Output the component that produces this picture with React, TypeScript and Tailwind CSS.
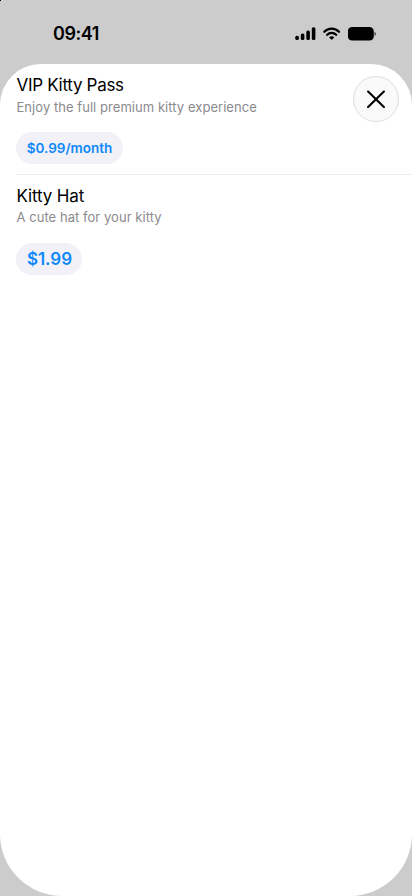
const products = [
  {
    id: "pass",
    title: "VIP Kitty Pass",
    description: "Enjoy the full premium kitty experience",
    price: "$0.99/month",
    titleClass: "tracking-[-0.3px]",
    priceClass: "w-[107px] text-[13.5px]",
  },
  {
    id: "hat",
    title: "Kitty Hat",
    description: "A cute hat for your kitty",
    price: "$1.99",
    titleClass: "tracking-[-0.15px]",
    priceClass: "w-[66px] pl-px pt-[1.5px] text-[17px]",
  },
];

function StatusBar() {
  return (
    <header className="flex h-16 items-start justify-between pl-[53px] pr-[35px] pt-[23px]">
      <span className="text-[18px] font-semibold leading-[22px] tracking-[-0.45px]">09:41</span>
      <div className="flex items-center pt-[4px]">
        {/* Signal */}
        <svg className="mr-[7px]" width="21" height="14" viewBox="0 0 21 14" fill="#000">
          <rect x="0.3" y="8.8" width="3.6" height="4.2" rx="1.5" />
          <rect x="5.8" y="6.4" width="3.6" height="6.6" rx="1.5" />
          <rect x="11.3" y="3.5" width="3.6" height="9.5" rx="1.5" />
          <rect x="16.8" y="0.3" width="3.6" height="12.7" rx="1.5" />
        </svg>
        {/* Wi-Fi */}
        <svg className="mr-[7px]" width="18" height="14" viewBox="0 0 18 14" fill="none" stroke="#000" strokeWidth="2.3" strokeLinecap="round">
          <path d="M1.3 4.7C5.3 0.5 12 0.5 16 4.7" />
          <path d="M4.2 7.8C6.7 5.2 10.6 5.2 13.1 7.8" />
          <path d="M6.1 10.4Q8.7 8.3 11.3 10.4L9.1 12.6Q8.7 13 8.3 12.6Z" fill="#000" stroke="none" />
        </svg>
        {/* Battery */}
        <svg width="29" height="14" viewBox="0 0 29 14" fill="#000">
          <rect x="-0.2" y="0.1" width="26" height="13.4" rx="4.3" />
          <path d="M26.7 4.7Q28.7 6.8 26.7 8.9Z" />
        </svg>
      </div>
    </header>
  );
}

export default function App() {
  return (
    <div className="relative h-[896px] w-full overflow-hidden bg-[#cccccc] font-['Inter',sans-serif] text-black">
      <span className="absolute left-0 top-0 size-px bg-black" />
      <StatusBar />
      <main className="relative h-[832px] rounded-t-[41px] rounded-b-[62px] bg-white">
        {products.map((item) => (
          <section key={item.id} className="ml-4 h-[110.5px] border-b border-[#ececee] pt-[10px] last-of-type:border-0">
            <h2 className={`pl-[0.5px] text-[17px] leading-[22px] ${item.titleClass}`}>{item.title}</h2>
            <p className="mt-[1.5px] pl-[0.5px] text-[13px] leading-[18px] tracking-[0.05px] text-[#8a8a8d]">
              {item.description}
            </p>
            <button
              className={`mt-[16.5px] flex h-8 items-center justify-center rounded-full bg-[#f1f1f7] font-semibold text-[#0e88fb] ${item.priceClass}`}
            >
              {item.price}
            </button>
          </section>
        ))}
        <button
          aria-label="Close"
          className="absolute right-[13px] top-3 flex size-[46px] items-center justify-center rounded-full border border-[#dcdcdc] bg-[#fafafa]"
        >
          <svg width="18" height="18" viewBox="0 0 18 18" stroke="#000" strokeWidth="2.1" strokeLinecap="round">
            <path d="M1.1 1.6L16.9 17M16.9 1.6L1.1 17" />
          </svg>
        </button>
      </main>
    </div>
  );
}
